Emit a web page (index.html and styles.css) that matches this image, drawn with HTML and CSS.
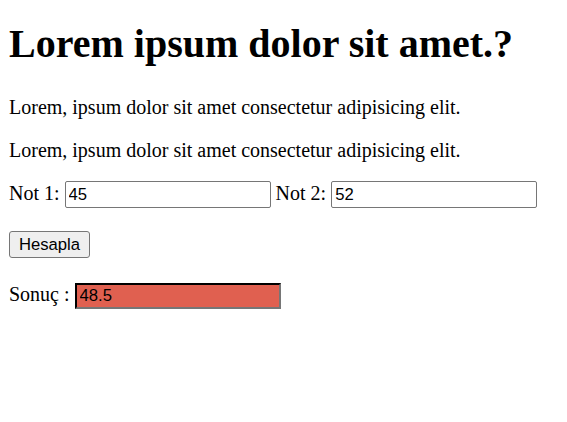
FILE: index.html
```html
<!DOCTYPE html>
<html>
<head>
<meta charset="utf-8">
<link rel="stylesheet" href="styles.css">
</head>
<body>
<h1 class="title">Lorem ipsum dolor sit amet.?</h1>
<p class="text">Lorem, ipsum dolor sit amet consectetur adipisicing elit.</p>
<p class="text">Lorem, ipsum dolor sit amet consectetur adipisicing elit.</p>
<p class="row">Not 1: <input class="field" type="text" value="45"> Not 2: <input class="field" type="text" value="52"></p>
<p class="row row-btn"><button class="btn">Hesapla</button></p>
<p class="row row-result">Sonuç : <input class="field result" type="text" value="48.5" readonly></p>
</body>
</html>
```
FILE: styles.css
```css
body {
  margin: 9px;
  font-family: "Liberation Serif", serif;
  font-size: 20px;
  color: #000;
  background: #fff;
}
.title {
  font-size: 40px;
  font-weight: bold;
  margin: 11px 0 29px;
}
.text {
  margin: 20px 0 19px;
}
.row {
  margin: 18px 0;
}
.row-btn {
  margin-top: 23px;
}
.row-result {
  margin-top: 25px;
}
.field {
  font-family: "Liberation Sans", Arial, sans-serif;
  font-size: 16.67px;
  border: 1px solid #767676;
  border-radius: 2px;
  padding: 2px 3px;
  height: 27px;
  box-sizing: border-box;
  width: 206px;
  vertical-align: baseline;
}
.btn {
  font-family: "Liberation Sans", Arial, sans-serif;
  font-size: 16.67px;
  padding: 1px 8px;
  height: 27px;
  width: 81px;
  border: 1px solid #767676;
  border-radius: 3px;
  background: #efefef;
}
.result {
  background: #e06050;
  border: 2px inset #767676;
  border-top-color: #222;
  border-left-color: #222;
  border-radius: 0;
  height: 26px;
}
```
